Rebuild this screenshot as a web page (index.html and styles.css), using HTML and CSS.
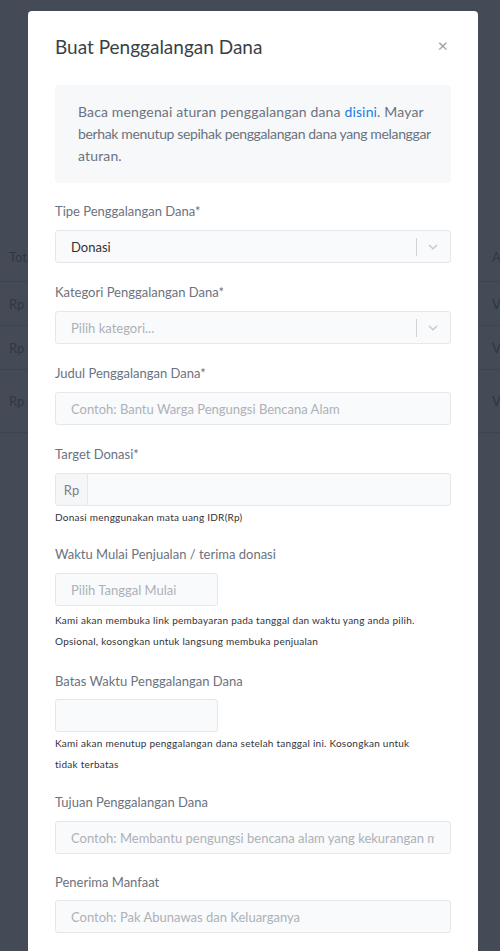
FILE: index.html
```
<!DOCTYPE html>
<html lang="id">
<head>
<meta charset="utf-8">
<title>Buat Penggalangan Dana</title>
<link rel="stylesheet" href="styles.css">
</head>
<body>
<div class="page">
  <div class="table">
    <div class="row head"><span class="c1">Total Donasi</span><span class="c2">Aksi</span></div>
    <div class="row"><span class="c1">Rp 0</span><span class="c2 link">View</span></div>
    <div class="row"><span class="c1">Rp 0</span><span class="c2 link">View</span></div>
    <div class="row tall"><span class="c1">Rp 0</span><span class="c2 link">View</span></div>
  </div>
</div>
<div class="overlay"></div>
<div class="modal">
  <div class="modal-header">
    <h2 class="modal-title">Buat Penggalangan Dana</h2>
    <span class="close">&times;</span>
  </div>
  <div class="info"><span class="info-line">Baca mengenai aturan penggalangan dana <a class="info-link">disini</a>. Mayar</span><span class="info-line condensed">berhak menutup sepihak penggalangan dana yang melanggar</span><span class="info-line">aturan.</span></div>

  <div class="group">
    <div class="label">Tipe Penggalangan Dana*</div>
    <div class="select">
      <span class="select-value">Donasi</span>
      <span class="select-sep"></span>
      <svg class="chev" width="12" height="8" viewBox="0 0 12 8"><path d="M2 2 L6 5.8 L10 2" fill="none" stroke="#c8c8c8" stroke-width="1.5"/></svg>
    </div>
  </div>

  <div class="group">
    <div class="label">Kategori Penggalangan Dana*</div>
    <div class="select">
      <span class="select-value ph">Pilih kategori...</span>
      <span class="select-sep"></span>
      <svg class="chev" width="12" height="8" viewBox="0 0 12 8"><path d="M2 2 L6 5.8 L10 2" fill="none" stroke="#c8c8c8" stroke-width="1.5"/></svg>
    </div>
  </div>

  <div class="group">
    <div class="label">Judul Penggalangan Dana*</div>
    <div class="input"><span class="input-text ph">Contoh: Bantu Warga Pengungsi Bencana Alam</span></div>
  </div>

  <div class="group has-help">
    <div class="label">Target Donasi*</div>
    <div class="input-group">
      <span class="addon">Rp</span>
      <span class="input-fill"></span>
    </div>
    <div class="help">Donasi menggunakan mata uang IDR(Rp)</div>
  </div>

  <div class="group">
    <div class="label">Waktu Mulai Penjualan / terima donasi</div>
    <div class="input date"><span class="input-text ph">Pilih Tanggal Mulai</span></div>
    <div class="help gap">Kami akan membuka link pembayaran pada tanggal dan waktu yang anda pilih. Opsional, kosongkan untuk langsung membuka penjualan</div>
  </div>

  <div class="group mid">
    <div class="label tight">Batas Waktu Penggalangan Dana</div>
    <div class="input date"></div>
    <div class="help">Kami akan menutup penggalangan dana setelah tanggal ini. Kosongkan untuk<br>tidak terbatas</div>
  </div>

  <div class="group short">
    <div class="label">Tujuan Penggalangan Dana</div>
    <div class="input"><span class="input-text ph">Contoh: Membantu pengungsi bencana alam yang kekurangan makanan dan pakaian</span></div>
  </div>

  <div class="group">
    <div class="label tight">Penerima Manfaat</div>
    <div class="input"><span class="input-text ph">Contoh: Pak Abunawas dan Keluarganya</span></div>
  </div>
</div>
</body>
</html>
```
FILE: styles.css
```
* { box-sizing: border-box; }
html, body { margin: 0; padding: 0; }
body {
  width: 500px;
  height: 951px;
  overflow: hidden;
  background: #ffffff;
  font-family: "Lato", "Noto Sans", sans-serif;
  color: #333;
}
.page { padding-top: 232px; }
.table { font-size: 13px; color: #a0a6ae; }
.row {
  display: flex;
  justify-content: space-between;
  align-items: center;
  height: 44px;
  border-bottom: 1px solid #d8dbe0;
  padding: 0 0 0 9px;
}
.row.head { height: 50px; }
.row.tall { height: 63px; }
.c2 { width: 40px; margin-right: -32px; white-space: nowrap; }
.link { color: #6e9be0; }
.overlay {
  position: fixed;
  inset: 0;
  background: rgba(17, 24, 39, 0.78);
}
.modal {
  position: absolute;
  top: 11px;
  left: 28px;
  width: 450px;
  min-height: 1100px;
  background: #fff;
  border-radius: 4px;
  padding: 24px 27px;
}
.modal-header {
  display: flex;
  justify-content: space-between;
  align-items: center;
  margin-bottom: 26px;
}
.modal-title {
  margin: 0;
  font-size: 19px;
  line-height: 24px;
  font-weight: 400;
  color: #3a3f47;
}
.close {
  font-size: 18px;
  line-height: 20px;
  color: #a0a0a0;
  margin-right: 3px;
  margin-top: -4px;
}
.info {
  background: #f7f8fa;
  border-radius: 4px;
  padding: 16px 6px 16px 23px;
  font-size: 14px;
  letter-spacing: 0.15px;
  line-height: 22px;
  color: #6b7280;
  margin-bottom: 18px;
}
.info-line { display: block; white-space: nowrap; }
.info-line.condensed { letter-spacing: -0.35px; }
.info-link { color: #1a7ee8; }
.group { margin-bottom: 19px; }
.group.has-help { margin-bottom: 16px; }
.group.mid { margin-bottom: 17px; }
.group.short { margin-bottom: 18px; }
.label {
  font-size: 13px;
  line-height: 20px;
  color: #6b7280;
  margin-bottom: 9px;
}
.label.tight { margin-bottom: 8px; }
.select, .input, .input-group {
  height: 33px;
  background: #f9fafb;
  border: 1px solid #e5e7eb;
  border-radius: 3px;
  display: flex;
  align-items: center;
  font-size: 13px;
}
.select { padding-left: 15px; }
.select-value { flex: 1; color: #333; }
.ph { color: #adb1b7; }
.select-value.ph { color: #adb1b7; }
.select-sep {
  width: 1px;
  height: 18px;
  background: #cfd2d6;
}
.chev { margin: 0 11px 0 10px; }
.input { padding: 0 16px 0 15px; }
.input-text {
  flex: 1;
  min-width: 0;
  white-space: nowrap;
  overflow: hidden;
}
.input.date { width: 163px; }
.input-group { overflow: hidden; }
.addon {
  width: 32px;
  height: 100%;
  display: flex;
  align-items: center;
  justify-content: center;
  border-right: 1px solid #e5e7eb;
  background: #f5f6f8;
  color: #7b8088;
}
.input-fill { flex: 1; }
.help {
  margin-top: 1px;
  font-size: 10px;
  line-height: 21px;
  letter-spacing: 0.25px;
  color: #2f333a;
}
.help.gap { margin-top: 4px; }
```
